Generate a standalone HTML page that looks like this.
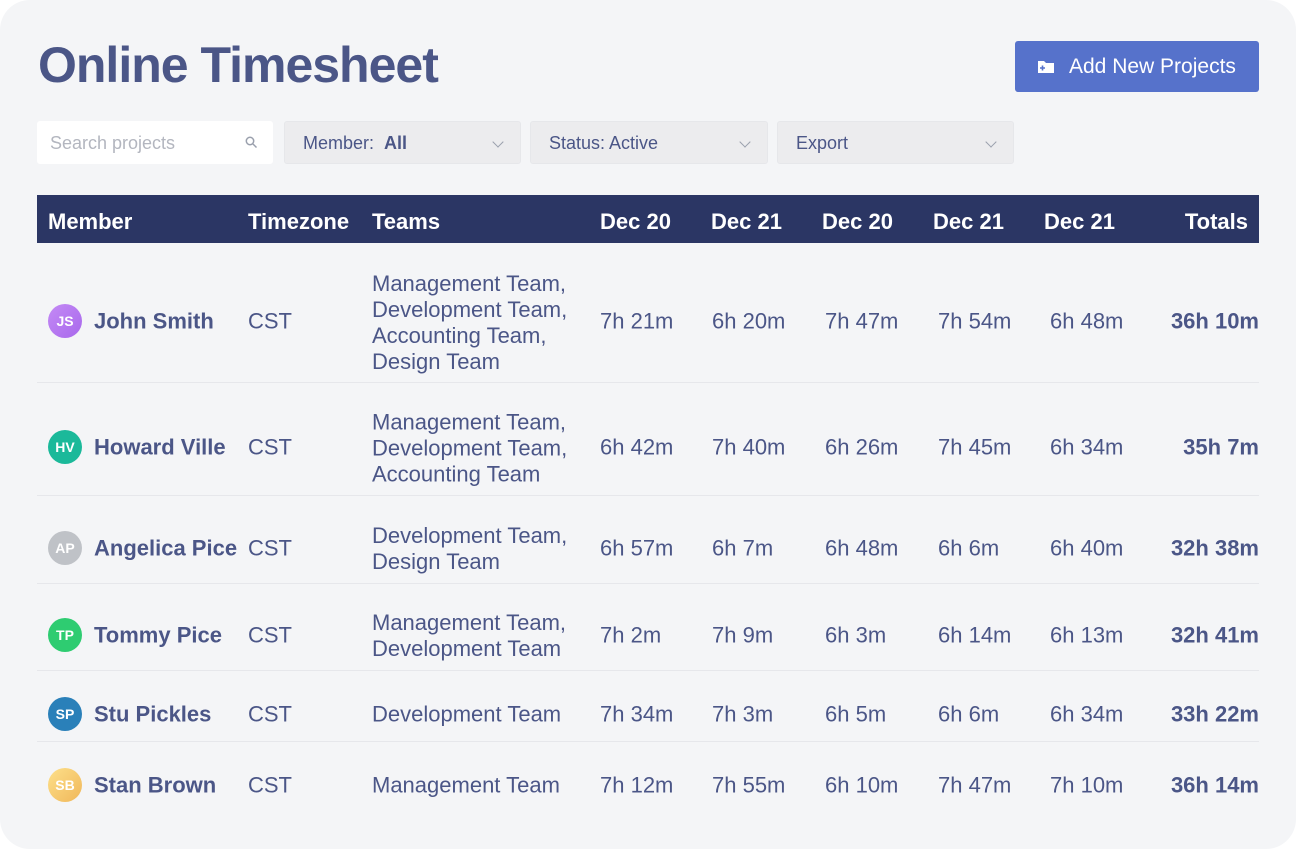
<!DOCTYPE html>
<html><head><style>
*{margin:0;padding:0;box-sizing:border-box}
body{width:1296px;height:850px;background:#fff;font-family:"Liberation Sans",sans-serif;color:#4b5687;position:relative;overflow:hidden}
.card{position:absolute;left:0;top:0;width:1296px;height:849px;background:#f4f5f7;border-radius:30px}
h1{position:absolute;left:38px;top:36px;font-size:50px;font-weight:700;letter-spacing:-1px;color:#4b5687}
.btn{position:absolute;left:1015px;top:41px;width:244px;height:51px;background:#5672cb;border-radius:3px;color:#fff;font-size:21px;line-height:51px;padding-left:54px}
.box{position:absolute;top:121px;height:43px;background:#ececee;border:1px solid #e6e7ea;border-radius:3px;font-size:18px;line-height:43px;padding-left:18px;color:#4b5687}
.chev{position:absolute;right:18px;top:16px;width:8px;height:8px;border-right:1.5px solid #9aa0ad;border-bottom:1.5px solid #9aa0ad;transform:rotate(45deg)}
.hdr{position:absolute;left:37px;top:195px;width:1222px;height:48px;background:#2b3664;color:#fff;font-size:22px;font-weight:700}
.hdr span{position:absolute;top:14px}
.row{position:absolute;left:37px;width:1222px;border-bottom:1px solid #e6e7eb}
.c{position:absolute;font-size:22px;transform:translateY(-48%);white-space:nowrap;line-height:26px}
.b{font-weight:700}
.av{position:absolute;left:48px;width:34px;height:34px;border-radius:50%;color:#fff;font-size:14px;font-weight:700;text-align:center;line-height:34px;transform:translateY(-50%)}
</style></head><body>
<div class="card"></div>
<h1>Online Timesheet</h1>
<div class="btn"><svg style="position:absolute;left:22px;top:18px" width="18" height="15" viewBox="0 0 18 15"><path d="M1 2h6l2 2h8v10H1z" fill="#fff"/><path d="M3 9h5M5.5 6.5v5" stroke="#5672cb" stroke-width="1.6"/></svg>Add New Projects</div>
<div class="box" style="left:37px;width:236px;background:#fff;border-color:#fff;color:#b3b6bf;padding-left:12px">Search projects<svg style="position:absolute;right:14px;top:14px" width="13" height="13" viewBox="0 0 13 13"><circle cx="5" cy="5" r="3.7" fill="none" stroke="#9aa0ad" stroke-width="1.5"/><path d="M8 8l3.5 3.5" stroke="#9aa0ad" stroke-width="1.5"/></svg></div>
<div class="box" style="left:284px;width:237px">Member:&nbsp; <b style="font-weight:600">All</b><i class="chev"></i></div>
<div class="box" style="left:530px;width:238px">Status: Active<i class="chev"></i></div>
<div class="box" style="left:777px;width:237px">Export<i class="chev"></i></div>
<div class="hdr">
<span style="left:11px">Member</span><span style="left:211px">Timezone</span><span style="left:335px">Teams</span>
<span style="left:563px">Dec 20</span><span style="left:674px">Dec 21</span><span style="left:785px">Dec 20</span><span style="left:896px">Dec 21</span><span style="left:1007px">Dec 21</span><span style="right:11px">Totals</span>
</div>
<div class="row" style="top:243px;height:140px"></div>
<div class="row" style="top:383px;height:113px"></div>
<div class="row" style="top:496px;height:88px"></div>
<div class="row" style="top:584px;height:87px"></div>
<div class="row" style="top:671px;height:71px"></div>

<div class="av" style="top:321px;background:linear-gradient(135deg,#c48af5,#a868ec)">JS</div>
<div class="c b" style="left:94px;top:321px">John Smith</div>
<div class="c" style="left:248px;top:321px">CST</div>
<div class="c" style="left:372px;top:321px">Management Team,<br>Development Team,<br>Accounting Team,<br>Design Team</div>
<div class="c" style="left:600px;top:321px">7h 21m</div><div class="c" style="left:712px;top:321px">6h 20m</div><div class="c" style="left:825px;top:321px">7h 47m</div><div class="c" style="left:938px;top:321px">7h 54m</div><div class="c" style="left:1050px;top:321px">6h 48m</div>
<div class="c b" style="right:37px;top:321px">36h 10m</div>

<div class="av" style="top:447px;background:#1bb99a">HV</div>
<div class="c b" style="left:94px;top:447px">Howard Ville</div>
<div class="c" style="left:248px;top:447px">CST</div>
<div class="c" style="left:372px;top:447px">Management Team,<br>Development Team,<br>Accounting Team</div>
<div class="c" style="left:600px;top:447px">6h 42m</div><div class="c" style="left:712px;top:447px">7h 40m</div><div class="c" style="left:825px;top:447px">6h 26m</div><div class="c" style="left:938px;top:447px">7h 45m</div><div class="c" style="left:1050px;top:447px">6h 34m</div>
<div class="c b" style="right:37px;top:447px">35h 7m</div>

<div class="av" style="top:548px;background:#bfc2c7">AP</div>
<div class="c b" style="left:94px;top:548px">Angelica Pice</div>
<div class="c" style="left:248px;top:548px">CST</div>
<div class="c" style="left:372px;top:548px">Development Team,<br>Design Team</div>
<div class="c" style="left:600px;top:548px">6h 57m</div><div class="c" style="left:712px;top:548px">6h 7m</div><div class="c" style="left:825px;top:548px">6h 48m</div><div class="c" style="left:938px;top:548px">6h 6m</div><div class="c" style="left:1050px;top:548px">6h 40m</div>
<div class="c b" style="right:37px;top:548px">32h 38m</div>

<div class="av" style="top:635px;background:#2ecc71">TP</div>
<div class="c b" style="left:94px;top:635px">Tommy Pice</div>
<div class="c" style="left:248px;top:635px">CST</div>
<div class="c" style="left:372px;top:635px">Management Team,<br>Development Team</div>
<div class="c" style="left:600px;top:635px">7h 2m</div><div class="c" style="left:712px;top:635px">7h 9m</div><div class="c" style="left:825px;top:635px">6h 3m</div><div class="c" style="left:938px;top:635px">6h 14m</div><div class="c" style="left:1050px;top:635px">6h 13m</div>
<div class="c b" style="right:37px;top:635px">32h 41m</div>

<div class="av" style="top:714px;background:#2a80b9">SP</div>
<div class="c b" style="left:94px;top:714px">Stu Pickles</div>
<div class="c" style="left:248px;top:714px">CST</div>
<div class="c" style="left:372px;top:714px">Development Team</div>
<div class="c" style="left:600px;top:714px">7h 34m</div><div class="c" style="left:712px;top:714px">7h 3m</div><div class="c" style="left:825px;top:714px">6h 5m</div><div class="c" style="left:938px;top:714px">6h 6m</div><div class="c" style="left:1050px;top:714px">6h 34m</div>
<div class="c b" style="right:37px;top:714px">33h 22m</div>

<div class="av" style="top:785px;background:linear-gradient(135deg,#fde08a,#f0b75a)">SB</div>
<div class="c b" style="left:94px;top:785px">Stan Brown</div>
<div class="c" style="left:248px;top:785px">CST</div>
<div class="c" style="left:372px;top:785px">Management Team</div>
<div class="c" style="left:600px;top:785px">7h 12m</div><div class="c" style="left:712px;top:785px">7h 55m</div><div class="c" style="left:825px;top:785px">6h 10m</div><div class="c" style="left:938px;top:785px">7h 47m</div><div class="c" style="left:1050px;top:785px">7h 10m</div>
<div class="c b" style="right:37px;top:785px">36h 14m</div>
</body></html>
